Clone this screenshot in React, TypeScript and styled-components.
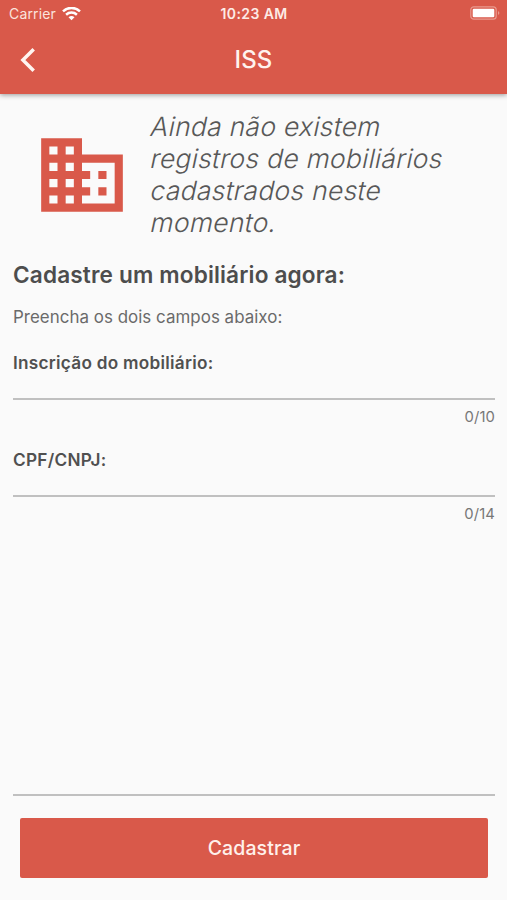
import React from "react";
import styled, { createGlobalStyle } from "styled-components";

const RED = "#d9594a";

const GlobalStyle = createGlobalStyle`
  * { box-sizing: border-box; }
  body { margin: 0; background: #fafafa; font-family: Inter, "Liberation Sans", sans-serif; }
`;

const Screen = styled.div`
  display: flex;
  flex-direction: column;
  width: 507px;
  height: 900px;
  overflow: hidden;
  background: #fafafa;
`;

const Header = styled.header`
  flex: none;
  height: 94px;
  background: ${RED};
  box-shadow: 0 1px 5px rgba(0, 0, 0, 0.4);
`;

const StatusBar = styled.div`
  display: grid;
  grid-template-columns: 1fr auto 1fr;
  align-items: center;
  height: 27px;
  padding: 0 7px 0 9px;
`;

const Carrier = styled.div`
  display: flex;
  align-items: center;
  gap: 6px;
  font-size: 14px;
  letter-spacing: 0.15px;
  color: #fbe3dd;
`;

const Clock = styled.div`
  margin-left: -1px;
  font-size: 14px;
  font-weight: 600;
  letter-spacing: 0.4px;
  color: #fdebe6;
`;

const BatterySlot = styled.div`
  display: flex;
  justify-content: flex-end;
  margin-top: -1px;
`;

const NavBar = styled.div`
  display: grid;
  grid-template-columns: 56px 1fr 56px;
  align-items: center;
  height: 65px;
`;

const BackButton = styled.button`
  display: flex;
  padding: 0 0 0 19px;
  border: 0;
  background: none;
`;

const Title = styled.h1`
  margin: 0;
  font-size: 24px;
  font-weight: 500;
  letter-spacing: 0.2px;
  text-align: center;
  color: #fff3ef;
`;

const Content = styled.main`
  flex: 1;
  display: flex;
  flex-direction: column;
  padding: 17px 12px 22px 13px;
`;

const EmptyState = styled.section`
  display: flex;
  align-items: center;
  height: 128px;
  padding-left: 19.5px;
  gap: 18.5px;
`;

const EmptyMessage = styled.p`
  margin: 0;
  font-size: 26.5px;
  font-weight: 300;
  line-height: 31.8px;
  letter-spacing: 0.25px;
  color: #585858;
`;

const SlantedLine = styled.span`
  display: block;
  white-space: nowrap;
  transform: skewX(-12deg);
  transform-origin: 0 80%;
`;

const Heading = styled.h2`
  margin: 21px 0 0;
  font-size: 22.6px;
  font-weight: 600;
  line-height: 30px;
  letter-spacing: 0.15px;
  color: #4d4d4d;
`;

const Hint = styled.p`
  margin: 16px 0 0;
  font-size: 16.9px;
  line-height: 22px;
  letter-spacing: 0.04px;
  color: #6a6a6a;
`;

const Field = styled.label<{ $gap: number }>`
  display: flex;
  flex-direction: column;
  margin-top: ${({ $gap }) => $gap}px;
`;

const FieldLabel = styled.span`
  font-size: 17.2px;
  font-weight: 600;
  line-height: 22px;
  letter-spacing: 0.27px;
  color: #505050;
`;

const Input = styled.input`
  height: 26px;
  padding: 0;
  border: 0;
  border-bottom: 2px solid #c0c0c0;
  border-radius: 0;
  outline: 0;
  background: transparent;
  font: 16px Inter, sans-serif;
`;

const Counter = styled.span`
  align-self: flex-end;
  margin-top: 7px;
  font-size: 14.8px;
  line-height: 20px;
  letter-spacing: 0.1px;
  color: #777;
`;

const Footer = styled.footer`
  margin-top: auto;
  padding: 22px 7px 0;
  border-top: 2px solid #c0c0c0;
`;

const SubmitButton = styled.button`
  display: block;
  width: 100%;
  height: 60px;
  border: 0;
  border-radius: 2px;
  background: ${RED};
  font-family: inherit;
  font-size: 19.5px;
  font-weight: 500;
  letter-spacing: 0.1px;
  color: #fff0eb;
`;

const WifiIcon = () => (
  <svg width="19" height="14" viewBox="0 0 19 14" fill="none" stroke="#fff" strokeWidth="2.5">
    <path d="M1 4.3C5.8 -0.2 13.2 -0.2 18 4.3" />
    <path d="M4.1 7.7C7.2 4.9 11.8 4.9 14.9 7.7" />
    <path d="M6.5 10.3Q9.5 7.9 12.5 10.3L9.5 13.3Z" fill="#fff" stroke="none" />
  </svg>
);

const BatteryIcon = () => (
  <svg width="30" height="14" viewBox="0 0 30 14">
    <rect x="0.8" y="0.8" width="25.4" height="12.4" rx="3" fill="none" stroke="#e99a8f" strokeWidth="1.2" />
    <rect x="2.7" y="2.7" width="21.6" height="8.6" rx="1.2" fill="#fff" />
    <path d="M28 5Q30.8 7 28 9Z" fill="#e99a8f" />
  </svg>
);

const BackIcon = () => (
  <svg width="18" height="26" viewBox="0 0 18 26" fill="none" stroke="#fff5f1" strokeWidth="3.5">
    <path d="M14.7 2.2L3.9 13L14.7 23.8" />
  </svg>
);

const BuildingIcon = () => (
  <svg width="98" height="98" viewBox="0 0 24 24" fill={RED}>
    <path d="M12 7V3H2v18h20V7H12zM6 19H4v-2h2v2zm0-4H4v-2h2v2zm0-4H4V9h2v2zm0-4H4V5h2v2zm4 12H8v-2h2v2zm0-4H8v-2h2v2zm0-4H8V9h2v2zm0-4H8V5h2v2zm10 12h-8v-2h2v-2h-2v-2h2v-2h-2V9h8v10zm-2-8h-2v2h2v-2zm0 4h-2v2h2v-2z" />
  </svg>
);

const MESSAGE_LINES = [
  "Ainda não existem",
  "registros de mobiliários",
  "cadastrados neste",
  "momento.",
];

export default function App() {
  return (
    <>
      <GlobalStyle />
      <Screen>
        <Header>
          <StatusBar>
            <Carrier>
              Carrier
              <WifiIcon />
            </Carrier>
            <Clock>10:23 AM</Clock>
            <BatterySlot>
              <BatteryIcon />
            </BatterySlot>
          </StatusBar>
          <NavBar>
            <BackButton aria-label="Voltar">
              <BackIcon />
            </BackButton>
            <Title>ISS</Title>
          </NavBar>
        </Header>
        <Content>
          <EmptyState>
            <BuildingIcon />
            <EmptyMessage>
              {MESSAGE_LINES.map((line) => (
                <SlantedLine key={line}>{line} </SlantedLine>
              ))}
            </EmptyMessage>
          </EmptyState>
          <Heading>Cadastre um mobiliário agora:</Heading>
          <Hint>Preencha os dois campos abaixo:</Hint>
          <Field $gap={24}>
            <FieldLabel>Inscrição do mobiliário:</FieldLabel>
            <Input maxLength={10} />
            <Counter>0/10</Counter>
          </Field>
          <Field $gap={22}>
            <FieldLabel>CPF/CNPJ:</FieldLabel>
            <Input maxLength={14} />
            <Counter>0/14</Counter>
          </Field>
          <Footer>
            <SubmitButton>Cadastrar</SubmitButton>
          </Footer>
        </Content>
      </Screen>
    </>
  );
}
